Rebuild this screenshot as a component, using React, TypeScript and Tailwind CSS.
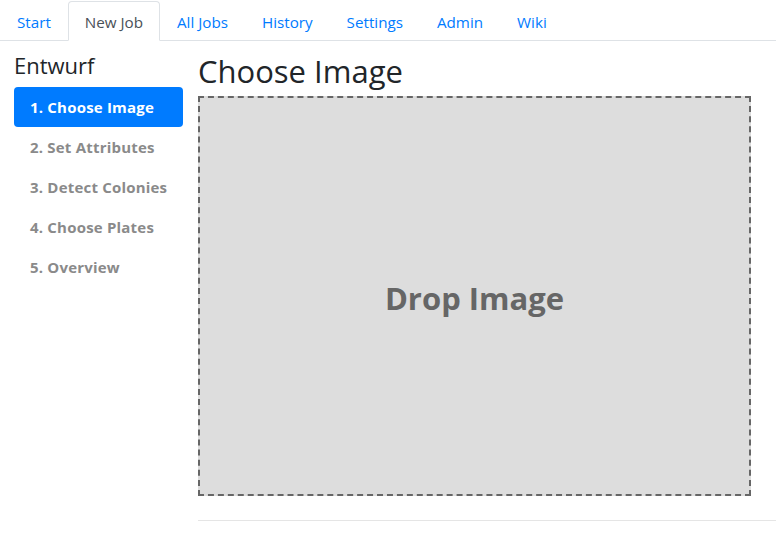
const tabs = ['Start', 'New Job', 'All Jobs', 'History', 'Settings', 'Admin', 'Wiki'];

const steps = ['1. Choose Image', '2. Set Attributes', '3. Detect Colonies', '4. Choose Plates', '5. Overview'];

export default function App() {
  return (
    <div className="min-h-[534px] bg-white text-[#212529] font-['Open_Sans','Noto_Sans',sans-serif]">
      {/* Top tabs */}
      <nav className="flex border-b border-[#dee2e6] pt-px">
        {tabs.map((tab) => {
          const active = tab === 'New Job';
          return (
            <a
              key={tab}
              href="#"
              className={`-mb-px h-10 px-4 pt-[2px] flex items-center text-[15.2px] rounded-t border ${
                active
                  ? 'border-[#dee2e6] border-b-white bg-white text-[#495057]'
                  : 'border-transparent text-[#007bff]'
              }`}
            >
              {tab}
            </a>
          );
        })}
      </nav>

      <div className="flex gap-[15px] pl-[14px]">
        {/* Sidebar */}
        <aside className="w-[169px] shrink-0">
          <h4 className="text-[22px] leading-[28px] mt-[10px] mb-[8px]">Entwurf</h4>
          <ul className="flex flex-col">
            {steps.map((step, i) => (
              <li
                key={step}
                className={`h-10 px-4 flex items-center whitespace-nowrap rounded text-[15px] tracking-[0.2px] font-bold ${
                  i === 0 ? 'bg-[#007bff] text-white' : 'text-[#8a8a8a]'
                }`}
              >
                {step}
              </li>
            ))}
          </ul>
        </aside>

        {/* Main */}
        <main className="flex-1 min-w-0">
          <h2 className="text-[31px] leading-[36px] mt-[12px] mb-[7px]">Choose Image</h2>
          <div className="w-[553px] h-[400px] bg-[#dddddd] border-2 border-dashed border-[#666666] flex items-center justify-center">
            <span className="text-[31px] font-bold text-[#666666] pt-[4px]">Drop Image</span>
          </div>
          <hr className="mt-[24px] border-t border-[#e5e5e5]" />
        </main>
      </div>
    </div>
  );
}
